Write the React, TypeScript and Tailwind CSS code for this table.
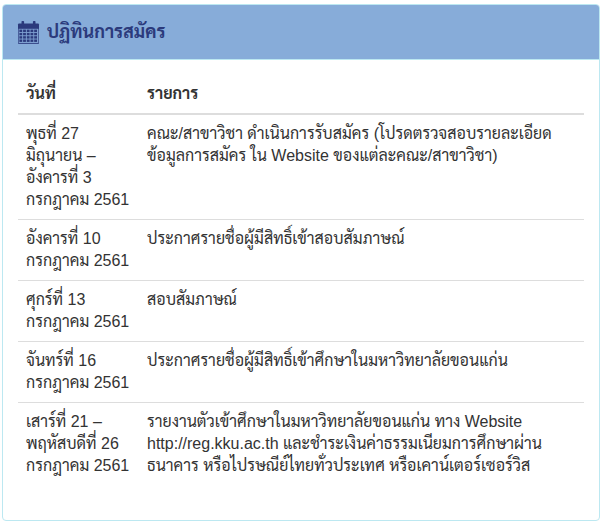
import React from "react";

const rows: { date: string[]; text: string }[] = [
  {
    date: ["พุธที่ 27", "มิถุนายน –", "อังคารที่ 3", "กรกฎาคม 2561"],
    text: "คณะ/สาขาวิชา ดำเนินการรับสมัคร (โปรดตรวจสอบรายละเอียดข้อมูลการสมัคร ใน Website ของแต่ละคณะ/สาขาวิชา)",
  },
  { date: ["อังคารที่ 10", "กรกฎาคม 2561"], text: "ประกาศรายชื่อผู้มีสิทธิ์เข้าสอบสัมภาษณ์" },
  { date: ["ศุกร์ที่ 13", "กรกฎาคม 2561"], text: "สอบสัมภาษณ์" },
  { date: ["จันทร์ที่ 16", "กรกฎาคม 2561"], text: "ประกาศรายชื่อผู้มีสิทธิ์เข้าศึกษาในมหาวิทยาลัยขอนแก่น" },
  {
    date: ["เสาร์ที่ 21 –", "พฤหัสบดีที่ 26", "กรกฎาคม 2561"],
    text: "รายงานตัวเข้าศึกษาในมหาวิทยาลัยขอนแก่น ทาง Website http://reg.kku.ac.th และชำระเงินค่าธรรมเนียมการศึกษาผ่านธนาคาร หรือไปรษณีย์ไทยทั่วประเทศ หรือเคาน์เตอร์เซอร์วิส",
  },
];

function CalendarIcon() {
  const cells = [];
  const cw = 2.8;
  const ch = 2.4;
  for (let r = 0; r < 4; r++) {
    for (let c = 0; c < 5; c++) {
      cells.push(
        <rect key={`${r}-${c}`} x={2.4 + c * (cw + 0.9)} y={8.6 + r * (ch + 0.9)} width={cw} height={ch} fill="#2b3a7c" />
      );
    }
  }
  return (
    <svg width="23" height="23" viewBox="0 0 23 23">
      <rect x="1" y="2.5" width="21" height="20.5" rx="1" fill="#2b3a7c" />
      <rect x="4.5" y="0" width="2.6" height="4.5" rx="0.8" fill="#2b3a7c" />
      <rect x="15.9" y="0" width="2.6" height="4.5" rx="0.8" fill="#2b3a7c" />
      <rect x="1.6" y="7.8" width="19.8" height="14.4" fill="#7d9fd0" />
      {cells}
    </svg>
  );
}

export default function App() {
  return (
    <div className="w-[603px] h-[525px] bg-white pt-[4px] pl-[2px] pr-[3px] font-['Liberation_Sans','Sarabun',Arial,sans-serif]">
      <div className="border border-[#bce8f1] rounded-[4px] h-[517px] overflow-hidden">
        <div className="h-[55px] bg-[#87acd9] border-b border-[#bce8f1] flex items-center pl-[14px] gap-[7px]">
          <CalendarIcon />
          <span className="text-[18px] font-bold text-[#2b3a7c]">ปฏิทินการสมัคร</span>
        </div>
        <div className="p-[15px]">
          <table className="w-full table-fixed border-collapse text-[16px] leading-[22px] text-[#333]">
            <thead>
              <tr className="border-b-2 border-[#ddd]">
                <th className="w-[121px] text-left font-bold p-[8px] align-bottom">วันที่</th>
                <th className="text-left font-bold p-[8px] align-bottom">รายการ</th>
              </tr>
            </thead>
            <tbody>
              {rows.map((r, i) => (
                <tr key={i} className={i > 0 ? "border-t border-[#ddd]" : ""}>
                  <td className="p-[8px] align-top whitespace-nowrap">
                    {r.date.map((d, j) => (
                      <div key={j}>{d}</div>
                    ))}
                  </td>
                  <td className="p-[8px] align-top">{r.text}</td>
                </tr>
              ))}
            </tbody>
          </table>
        </div>
      </div>
    </div>
  );
}
